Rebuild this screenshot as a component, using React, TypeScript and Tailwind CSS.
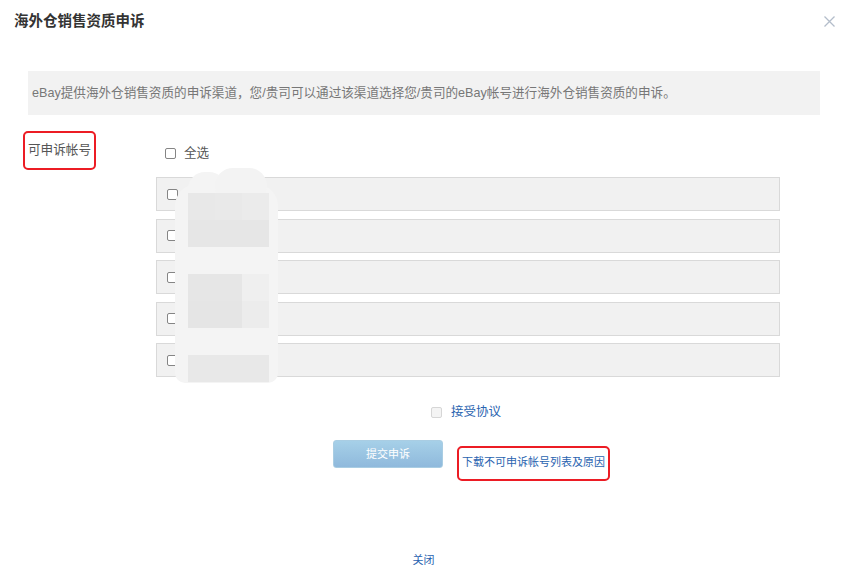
import React from 'react'

const FONT = { fontFamily: '"Liberation Sans", "Noto Sans CJK SC", sans-serif' }

const Box = ({ disabled = false }: { disabled?: boolean }) => (
  <span
    className={
      disabled
        ? 'inline-block w-[11px] h-[11px] rounded-[2px] border border-[#d6d6d6] bg-[#f4f4f4]'
        : 'inline-block w-[11px] h-[11px] rounded-[2px] border border-[#858585] bg-white'
    }
  />
)

// pixel cells of the mosaic that hides the account names
const CELLS = [
  ['#e8e8e8', '#e9e9e9', '#ebebeb'],
  ['#e6e6e6', '#e6e6e6', '#e6e6e6'],
  ['#f4f4f4', '#f4f4f4', '#f4f4f4'],
  ['#e6e6e6', '#e6e6e6', '#efefef'],
  ['#e5e5e5', '#e5e5e5', '#ececec'],
  ['#f4f4f4', '#f4f4f4', '#f4f4f4'],
  ['#e8e8e8', '#e8e8e8', '#e8e8e8'],
]

const Blur = () => (
  <div className='absolute left-[175px] top-[184px] w-[103px] h-[199px] rounded-t-[22px] rounded-b-[10px] bg-[#f4f4f4] pl-[13px] pt-[9px] pointer-events-none'>
    <div className='absolute left-[13px] -top-[12px] w-[38px] h-[34px] rounded-full bg-[#f4f4f4]' />
    <div className='absolute left-[40px] -top-[16px] w-[52px] h-[36px] rounded-full bg-[#f3f3f3]' />
    <div className='relative grid grid-cols-[27px_27px_27px] auto-rows-[27px]'>
      {CELLS.flat().map((c, i) => (
        <div key={i} style={{ background: c }} />
      ))}
    </div>
  </div>
)

const App = () => {
  const accounts = [1, 2, 3, 4, 5]
  return (
    <div style={FONT} className='relative w-[847px] h-[575px] bg-white overflow-hidden'>
      <div className='h-[44px] flex items-center justify-between pl-[14px] pr-[12px]'>
        <span className='text-[14.5px] font-bold text-[#333]'>海外仓销售资质申诉</span>
        <svg width='11' height='11' viewBox='0 0 11 11' className='mb-[1px]'>
          <path d='M0.5 0.5 L10.5 10.5 M10.5 0.5 L0.5 10.5' stroke='#b3bdca' strokeWidth='1.3' />
        </svg>
      </div>

      <div className='mt-[27px] ml-[28px] w-[792px] h-[44px] bg-[#f2f2f2] flex items-center pl-[4px] text-[12.6px] text-[#777]'>
        eBay提供海外仓销售资质的申诉渠道，您/贵司可以通过该渠道选择您/贵司的eBay帐号进行海外仓销售资质的申诉。
      </div>

      <div className='mt-[16px] flex'>
        <div className='w-[156px] shrink-0 pl-[23px]'>
          <div className='w-[73px] h-[39px] border-2 border-[#ec1c24] rounded-[5px] flex items-center pl-[3px] text-[12.6px] text-[#555]'>
            可申诉帐号
          </div>
        </div>
        <div className='w-[624px]'>
          <div className='h-[44px] flex items-center gap-[8px] pl-[9px] text-[12.6px] text-[#555] mb-[2px]'>
            <Box />
            <span>全选</span>
          </div>
          <div className='flex flex-col gap-[7.5px]'>
            {accounts.map((a) => (
              <div
                key={a}
                className='h-[34px] bg-[#f1f1f1] border border-[#d9d9d9] flex items-center pl-[10px]'
              >
                <Box />
              </div>
            ))}
          </div>
          <div className='mt-[25px] h-[20px] flex items-center justify-center gap-[9px] pr-[4px]'>
            <Box disabled />
            <span className='text-[12.5px] text-[#2a64b0]'>接受协议</span>
          </div>
          <div className='mt-[18px] flex items-start pl-[177px]'>
            <button className='w-[110px] h-[28px] rounded-[3px] border border-[#a9cde3] bg-gradient-to-b from-[#a6d0e8] to-[#8fb9dc] text-white text-[11px]'>
              提交申诉
            </button>
            <div className='ml-[14px] mt-[6px] w-[153px] h-[35px] border-2 border-[#ec1c24] rounded-[5px] flex items-center pl-[3px] pb-[3px] text-[11px] text-[#2a64b0]'>
              下载不可申诉帐号列表及原因
            </div>
          </div>
        </div>
      </div>

      <div className='mt-[71px] text-center text-[11px] text-[#2a64b0]'>关闭</div>

      <Blur />
    </div>
  )
}

export default App
